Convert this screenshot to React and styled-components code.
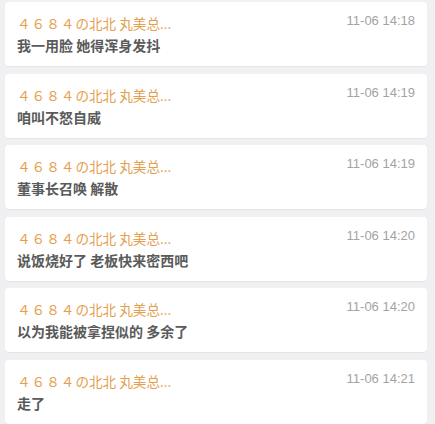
import React from "react";
import styled, { createGlobalStyle } from "styled-components";

const GlobalStyle = createGlobalStyle`
  html, body {
    margin: 0;
    padding: 0;
    background-color: #f0eff2;
  }
  body {
    font-family: "Noto Sans CJK SC", "Liberation Sans", sans-serif;
  }
`;

// 목록
const List = styled.ul`
  display: flex;
  flex-direction: column;
  gap: 7.6px;
  margin: 0;
  padding: 2px 8px 0 5px;
  list-style: none;
  height: 424px;
  overflow: hidden;
  box-sizing: border-box;
`;

const Card = styled.li`
  flex-shrink: 0;
  height: 64px;
  box-sizing: border-box;
  padding: 10px 12px 0 12px;
  background-color: #fff;
  border-radius: 4px;
  box-shadow: 0 1px 1px rgba(0, 0, 0, 0.05);
`;

const Head = styled.div`
  display: flex;
  justify-content: space-between;
  align-items: flex-start;
  height: 20px;
`;

const Name = styled.p`
  margin: 1px 0 0;
  color: #e5a04f;
  font-size: 13.6px;
  line-height: 20px;
  white-space: nowrap;

  > span {
    letter-spacing: 1px;
  }
`;

const Time = styled.span`
  margin-top: 2px;
  color: #a3a3a3;
  font-family: "Liberation Sans", Arial, sans-serif;
  font-size: 13px;
  line-height: 14px;
`;

const Message = styled.p`
  margin: 3px 0 0;
  color: #5a5a5a;
  font-size: 14px;
  font-weight: bold;
  line-height: 20px;
`;

const rows = [
  { time: "11-06 14:18", text: "我一用脸 她得浑身发抖" },
  { time: "11-06 14:19", text: "咱叫不怒自威" },
  { time: "11-06 14:19", text: "董事长召唤 解散" },
  { time: "11-06 14:20", text: "说饭烧好了 老板快来密西吧" },
  { time: "11-06 14:20", text: "以为我能被拿捏似的 多余了" },
  { time: "11-06 14:21", text: "走了" },
];

const App = () => {
  return (
    <>
      <GlobalStyle />
      <List>
        {rows.map((row, i) => (
          <Card key={i}>
            <Head>
              <Name>
                <span>４６８４</span>の北北 丸美总...
              </Name>
              <Time>{row.time}</Time>
            </Head>
            <Message>{row.text}</Message>
          </Card>
        ))}
      </List>
    </>
  );
};

export default App;
